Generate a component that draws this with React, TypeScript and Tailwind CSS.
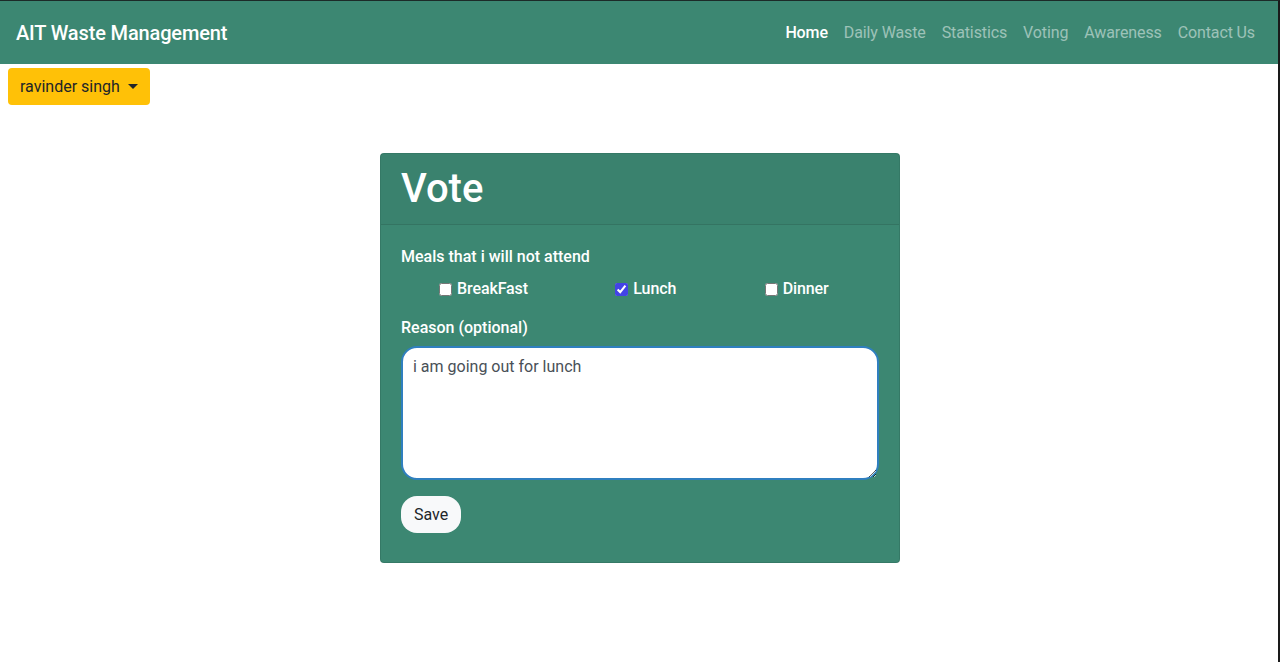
import React from "react";

export default function App() {
  const links = ["Daily Waste", "Statistics", "Voting", "Awareness", "Contact Us"];
  return (
    <div
      className="min-h-[662px] bg-white border-t border-t-[#1c2a28] border-r-2 border-r-[#1a1a1a] text-[16px] text-[#212529]"
      style={{ fontFamily: "Roboto, 'Liberation Sans', sans-serif" }}
    >
      <nav className="h-[63px] bg-[#3c8772] flex items-center justify-between pl-4 pr-[15px]">
        <span className="text-white text-[20px] font-medium leading-[30px] tracking-[-0.15px]">AIT Waste Management</span>
        <ul className="flex items-center tracking-[-0.12px]">
          <li className="px-2 text-white font-medium leading-6">Home</li>
          {links.map((l) => (
            <li key={l} className="px-2 text-white/50 leading-6">
              {l}
            </li>
          ))}
        </ul>
      </nav>
      <div className="pt-1 pl-2">
        <button className="h-[37px] px-3 bg-[#ffc107] rounded-[4px] text-[#212529] flex items-center leading-6">
          ravinder singh
          <span className="ml-2 w-0 h-0 border-l-[5px] border-r-[5px] border-t-[5px] border-l-transparent border-r-transparent border-t-[#212529]" />
        </button>
      </div>
      <div className="pl-[2px]">
        <div className="mt-12 mx-auto w-[520px] bg-[#3c8772] border border-black/10 rounded-[4px] text-white">
          <div className="px-5 pt-[11px] pb-[11px] bg-black/[0.03] border-b border-black/10">
            <h1 className="text-[40px] font-medium leading-[48px]">Vote</h1>
          </div>
          <div className="px-5 pt-5 pb-[29px]">
            <div className="mb-4">
              <div className="font-medium leading-6 mb-2">Meals that i will not attend</div>
              <div className="grid grid-cols-3 h-[23px]">
                {[
                  ["BreakFast", false, "pl-[38px]"],
                  ["Lunch", true, "pl-[55px]"],
                  ["Dinner", false, "pl-[45px]"],
                ].map(([name, checked, pad]) => (
                  <label key={name as string} className={`flex items-center font-medium tracking-[-0.1px] ${pad as string}`}>
                    <input
                      type="checkbox"
                      defaultChecked={checked as boolean}
                      className="w-[13px] h-[13px] mr-[5px] accent-[#4343e6]"
                    />
                    {name as string}
                  </label>
                ))}
              </div>
            </div>
            <div className="mb-4">
              <div className="font-medium leading-6 mb-[6px]">Reason (optional)</div>
              <textarea
                defaultValue="i am going out for lunch"
                className="block w-full h-[134px] rounded-[16px] bg-white border-2 border-[#2f7fbf] px-[10px] py-[7px] text-[#495057] leading-6 outline-none"
              />
            </div>
            <button className="h-[37px] px-[13px] bg-[#f8f9fa] rounded-[16px] text-[#212529] leading-6">Save</button>
          </div>
        </div>
      </div>
    </div>
  );
}
